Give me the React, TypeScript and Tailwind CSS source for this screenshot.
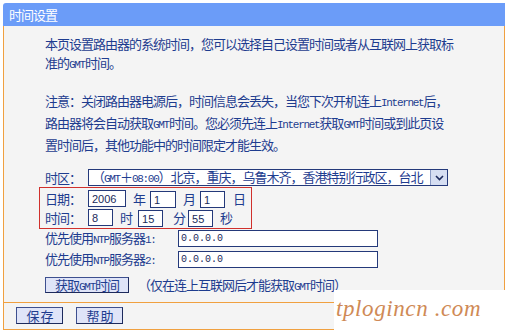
import React, { ReactNode } from "react";

// small ascii runs (GMT, Internet, NTP) are drawn in a narrow mono face
function Mono({ children }: { children: ReactNode }) {
  return (
    <span className="font-['Liberation_Mono',monospace] text-[11px] tracking-[-1.3px]">
      {children}
    </span>
  );
}

function Field({ value, width }: { value: string; width: string }) {
  return (
    <input
      readOnly
      value={value}
      className={`${width} h-[17px] border border-[#24397a] bg-white px-[3px] font-['Liberation_Sans',Arial,sans-serif] text-[11px] tracking-normal text-[#1a2a5a] outline-none`}
    />
  );
}

function Btn({ children, width }: { children: ReactNode; width: string }) {
  return (
    <div
      className={`${width} flex items-center justify-center border border-t-[#3d4f8f] border-l-[#3d4f8f] border-r-[#1d2a5c] border-b-[#1d2a5c] bg-[#dfe4f8] text-[#1e3c8f]`}
    >
      {children}
    </div>
  );
}

export default function App() {
  return (
    <div className="relative h-[331px] w-[509px] overflow-hidden bg-white font-['Noto_Sans_CJK_SC',sans-serif] text-[13px] tracking-[-1px] text-[#1e3c8f]">
      <div className="ml-[3px] mt-[3px] w-[502px]">
        <div className="h-[23px] rounded-tl-[3px] bg-[#6b9cf8] pl-[6px] leading-[23px] text-white">
          时间设置
        </div>
        <div className="border-x border-[#f0a040] bg-[#f4f4f4]">
          <div className="h-[276px] pl-[41px] pt-[8px]">
            <p className="whitespace-nowrap leading-[19px]">
              本页设置路由器的系统时间，您可以选择自己设置时间或者从互联网上获取标
              <br />
              准的<Mono>GMT</Mono>时间。
            </p>
            <p className="mt-[16px] whitespace-nowrap leading-[19px]">
              注意：关闭路由器电源后，时间信息会丢失，当您下次开机连上<Mono>Internet</Mono>后，
              <br />
              路由器将会自动获取<Mono>GMT</Mono>时间。您必须先连上<Mono>Internet</Mono>获取<Mono>GMT</Mono>时间或到此页设
              <br />
              置时间后，其他功能中的时间限定才能生效。
            </p>

            {/* time zone */}
            <div className="mt-[15px] flex h-[17px] items-center">
              <span className="w-[43px]">时区：</span>
              <div className="flex h-[17px] w-[360px] items-center justify-between border border-[#24397a] bg-white pl-[3px]">
                <span className="whitespace-nowrap">
                  （<Mono>GMT</Mono>＋<Mono>08:00</Mono>）北京，重庆，乌鲁木齐，香港特别行政区，台北
                </span>
                <div className="flex h-[15px] w-[17px] items-center justify-center border-l border-[#8a9ac4] bg-[#d6def2]">
                  <svg width="9" height="6" viewBox="0 0 9 6">
                    <path d="M1 1 L4.5 4.5 L8 1" fill="none" stroke="#1d2a5c" strokeWidth="1.6" />
                  </svg>
                </div>
              </div>
            </div>

            {/* date and time, framed in red */}
            <div className="-ml-[6px] mt-[1px] w-[213px] border border-[#d0302c] py-[1px] pl-[5px]">
              <div className="flex h-[19px] items-center">
                <span className="w-[43px]">日期：</span>
                <Field value="2006" width="w-[38px]" />
                <span className="ml-[7px]">年</span>
                <span className="ml-[5px]"><Field value="1" width="w-[26px]" /></span>
                <span className="ml-[7px]">月</span>
                <span className="ml-[5px]"><Field value="1" width="w-[25px]" /></span>
                <span className="ml-[8px]">日</span>
              </div>
              <div className="flex h-[19px] items-center">
                <span className="w-[43px]">时间：</span>
                <Field value="8" width="w-[25px]" />
                <span className="ml-[7px]">时</span>
                <span className="ml-[6px]"><Field value="15" width="w-[25px]" /></span>
                <span className="ml-[10px]">分</span>
                <span className="ml-[3px]"><Field value="55" width="w-[25px]" /></span>
                <span className="ml-[7px]">秒</span>
              </div>
            </div>

            {/* ntp servers */}
            <div className="mt-[1px] flex h-[17px] items-center">
              <span className="w-[133px] whitespace-nowrap">
                优先使用<Mono>NTP</Mono>服务器<Mono>1:</Mono>
              </span>
              <input
                readOnly
                value="0.0.0.0"
                className="h-[17px] w-[200px] border border-[#24397a] bg-white px-[2px] font-['Liberation_Mono',monospace] text-[10px] tracking-normal text-[#1a2a5a] outline-none"
              />
            </div>
            <div className="mt-[4px] flex h-[17px] items-center">
              <span className="w-[133px] whitespace-nowrap">
                优先使用<Mono>NTP</Mono>服务器<Mono>2:</Mono>
              </span>
              <input
                readOnly
                value="0.0.0.0"
                className="h-[17px] w-[200px] border border-[#24397a] bg-white px-[2px] font-['Liberation_Mono',monospace] text-[10px] tracking-normal text-[#1a2a5a] outline-none"
              />
            </div>

            <div className="mt-[9px] flex h-[16px] items-center">
              <Btn width="w-[84px] h-[16px]">
                <span>获取<Mono>GMT</Mono>时间</span>
              </Btn>
              <span className="ml-[9px] whitespace-nowrap">
                （仅在连上互联网后才能获取<Mono>GMT</Mono>时间）
              </span>
            </div>
          </div>

          <div className="flex h-[28px] gap-[13px] border-y border-[#f0a040] pl-[12px] pt-[4px]">
            <Btn width="w-[47px] h-[17px]">保 存</Btn>
            <Btn width="w-[47px] h-[17px]">帮 助</Btn>
          </div>
        </div>
      </div>

      {/* site watermark lying over the corner */}
      <div className="absolute left-[334px] top-[290px] h-[41px] w-[175px] whitespace-nowrap bg-white pl-[2px] pt-[5px] font-['Liberation_Serif',serif] text-[23px] italic leading-[28px] tracking-[0.6px] text-[#cf8a56]">
        tplogincn .com
      </div>
    </div>
  );
}
